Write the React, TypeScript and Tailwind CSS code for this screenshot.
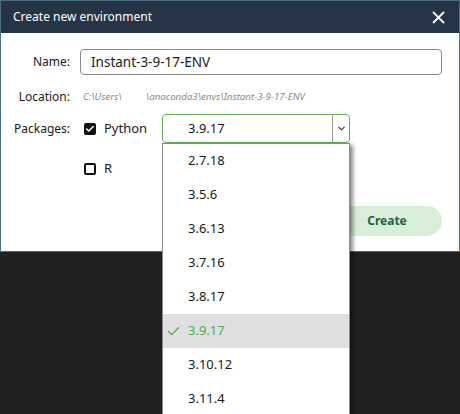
import { Check, ChevronDown } from 'lucide-react'

const versions = ['2.7.18', '3.5.6', '3.6.13', '3.7.16', '3.8.17', '3.9.17', '3.10.12', '3.11.4']
const selected = '3.9.17'

export default function App() {
  return (
    <div className="relative h-[414px] w-[460px] overflow-hidden bg-[#202020] text-[13px] text-[#1a1a1a]" style={{ fontFamily: '"Noto Sans", "Open Sans", sans-serif' }}>
      <div className="flex h-[252px] flex-col border border-[#4d6d80] bg-white">
        {/* title bar */}
        <div className="flex h-[32px] items-center justify-between bg-[#253446] pl-[12px] pr-[14px] text-white">
          <span className="text-[12px]">Create new environment</span>
          <svg width="13" height="13" viewBox="0 0 13 13" className="mt-[1px]">
            <path d="M1 1 L12 12 M12 1 L1 12" stroke="#fff" strokeWidth="1.8" />
          </svg>
        </div>

        <div className="flex flex-col pr-[17px]">
          <div className="mt-[16px] flex items-center">
            <span className="w-[70px] pr-[1px] text-right text-[12px]">Name:</span>
            <div className="ml-[9px] flex h-[26px] flex-1 items-center rounded-[4px] border border-[#8a8a8a] px-[10px] text-[13.5px]">
              Instant-3-9-17-ENV
            </div>
          </div>

          <div className="mt-[13px] flex items-center">
            <span className="w-[70px] pr-[1px] text-right text-[12px]">Location:</span>
            <span className="ml-[12px] text-[9.7px] italic text-[#8a8a8a]">
              C:\Users\<span className="inline-block w-[24px]" />\anaconda3\envs\Instant-3-9-17-ENV
            </span>
          </div>

          <div className="mt-[8px] flex items-start">
            <span className="mt-[6px] w-[70px] pr-[1px] text-right text-[12px]">Packages:</span>
            <div className="ml-[13px] flex flex-col">
              <div className="flex items-center">
                <div className="flex w-[78px] items-center">
                  <span className="flex h-[12px] w-[12px] items-center justify-center rounded-[2px] bg-[#111]">
                    <Check size={10} strokeWidth={3.5} color="#fff" />
                  </span>
                  <span className="ml-[8px]">Python</span>
                </div>
                <div className="flex h-[29px] w-[188px] items-center rounded-[4px] border border-[#5fb84f]">
                  <span className="flex-1 pl-[25px]">{selected}</span>
                  <span className="flex h-full w-[17px] items-center justify-center border-l border-[#9a9a9a]">
                    <ChevronDown size={11} strokeWidth={2.5} color="#333" />
                  </span>
                </div>
              </div>
              <div className="mt-[16px] flex items-center">
                <span className="h-[12px] w-[12px] rounded-[2px] border-2 border-[#111]" />
                <span className="ml-[8px]">R</span>
              </div>
            </div>
          </div>

          <div className="mt-[27px] flex justify-end">
            <button className="flex h-[30px] w-[102px] items-center justify-center rounded-full bg-[#d9eed9] pr-[8px] text-[12px] font-bold text-[#17683a]">
              Create
            </button>
          </div>
        </div>
      </div>

      {/* open dropdown list */}
      <div className="absolute left-[162px] top-[143px] w-[188px] border border-[#8a8a8a] bg-white shadow-[3px_2px_4px_rgba(0,0,0,0.45)]">
        {versions.map(v => (
          <div key={v} className={`flex h-[34px] items-center ${v === selected ? 'bg-[#dfdfdf] text-[#4caf50]' : ''}`}>
            <span className="flex w-[25px] pl-[3px]">
              {v === selected && <Check size={15} strokeWidth={2.2} color="#4caf50" />}
            </span>
            <span>{v}</span>
          </div>
        ))}
      </div>
    </div>
  )
}
